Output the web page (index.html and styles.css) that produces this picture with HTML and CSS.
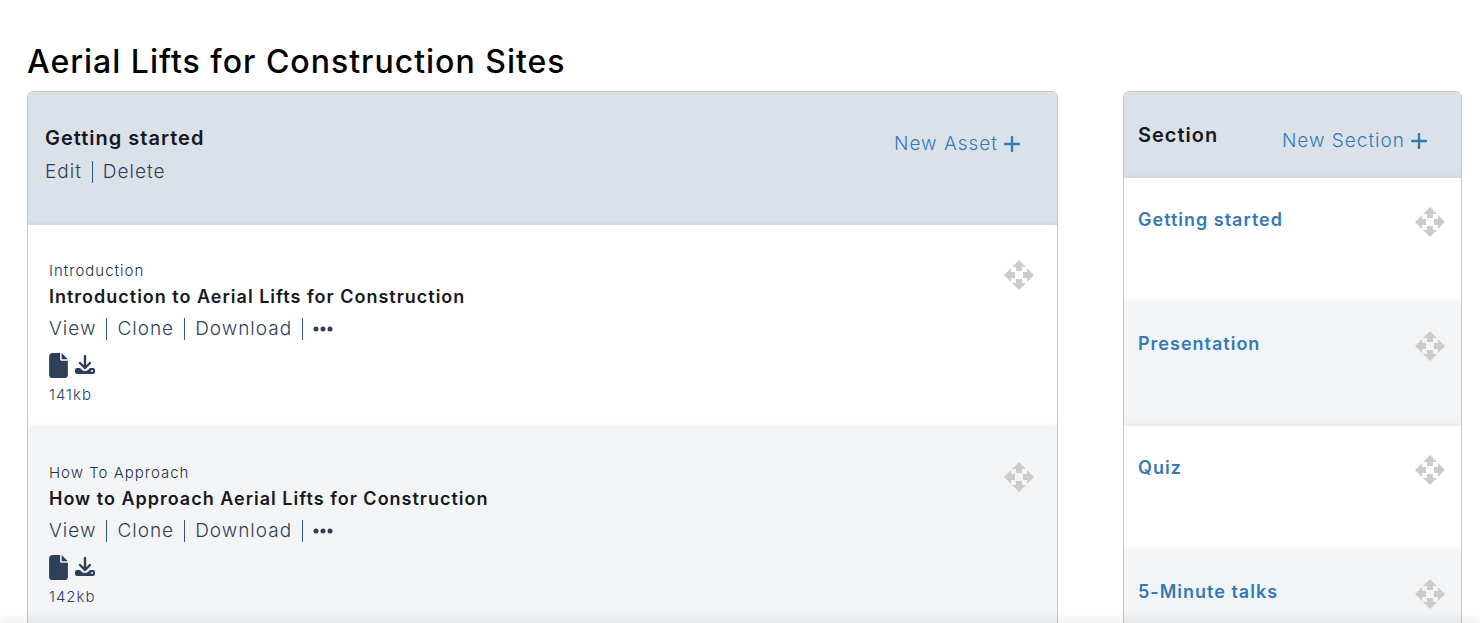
FILE: index.html
```
<!DOCTYPE html>
<html lang="en">
<head>
  <title>Aerial Lifts for Construction Sites</title>
  <meta charset="utf-8">
  <link rel="stylesheet" href="styles.css">
</head>
<body>
  <!-- shared icons -->
  <svg class="sprite" aria-hidden="true">
    <symbol id="move" viewBox="0 0 30 30">
      <path d="M15 0l7 7h-4v4h-6V7H8zM15 30l-7-7h4v-4h6v4h4zM0 15l7-7v4h4v6H7v4zM30 15l-7 7v-4h-4v-6h4V8z"/>
    </symbol>
    <symbol id="plus" viewBox="0 0 16 16">
      <path d="M8 1v14M1 8h14" fill="none" stroke="currentColor" stroke-width="2.400" stroke-linecap="round"/>
    </symbol>
    <symbol id="file" viewBox="0 0 384 512">
      <path d="M0 64C0 28.700 28.700 0 64 0H224v128c0 17.700 14.300 32 32 32h128v288c0 35.300-28.700 64-64 64H64c-35.300 0-64-28.700-64-64zM384 128H256V0z"/>
    </symbol>
    <symbol id="download" viewBox="0 0 20 20">
      <path d="M10 1v12M5 8l5 5 5-5" fill="none" stroke="currentColor" stroke-width="2.400" stroke-linecap="round" stroke-linejoin="round"/>
      <path d="M2 13h3l2 2q3 2 6 0l2-2h3q2 0 2 2v2q0 2-2 2H2q-2 0-2-2v-2q0-2 2-2zM17 15a1 1 0 1 0 0 2 1 1 0 0 0 0-2z" fill-rule="evenodd"/>
    </symbol>
    <symbol id="dots" viewBox="0 0 20 6">
      <circle cx="3" cy="3" r="2.500"/><circle cx="10" cy="3" r="2.500"/><circle cx="17" cy="3" r="2.500"/>
    </symbol>
  </svg>

  <div id="container">
    <h1>Aerial Lifts for Construction Sites</h1>
    <div class="columns">
      <main class="panel assets">
        <div class="panel-head">
          <div>
            <h2>Getting started</h2>
            <div class="links">
              <a href="#">Edit</a>
              <a href="#">Delete</a>
            </div>
          </div>
          <a class="new" href="#">New Asset <svg><use href="#plus"/></svg></a>
        </div>

        <div class="row">
          <div>
            <p class="small">Introduction</p>
            <h3>Introduction to Aerial Lifts for Construction</h3>
            <div class="links">
              <a href="#">View</a>
              <a href="#">Clone</a>
              <a href="#">Download</a>
              <a href="#" aria-label="More"><svg class="dots"><use href="#dots"/></svg></a>
            </div>
            <div class="files">
              <svg class="file"><use href="#file"/></svg>
              <svg class="download"><use href="#download"/></svg>
            </div>
            <p class="small size">141kb</p>
          </div>
          <svg class="move"><use href="#move"/></svg>
        </div>

        <div class="row">
          <div>
            <p class="small">How To Approach</p>
            <h3>How to Approach Aerial Lifts for Construction</h3>
            <div class="links">
              <a href="#">View</a>
              <a href="#">Clone</a>
              <a href="#">Download</a>
              <a href="#" aria-label="More"><svg class="dots"><use href="#dots"/></svg></a>
            </div>
            <div class="files">
              <svg class="file"><use href="#file"/></svg>
              <svg class="download"><use href="#download"/></svg>
            </div>
            <p class="small size">142kb</p>
          </div>
          <svg class="move"><use href="#move"/></svg>
        </div>
      </main>

      <aside class="panel sections">
        <div class="panel-head">
          <h2>Section</h2>
          <a class="new" href="#">New Section <svg><use href="#plus"/></svg></a>
        </div>
        <div class="row"><a href="#">Getting started</a><svg class="move"><use href="#move"/></svg></div>
        <div class="row"><a href="#">Presentation</a><svg class="move"><use href="#move"/></svg></div>
        <div class="row"><a href="#">Quiz</a><svg class="move"><use href="#move"/></svg></div>
        <div class="row"><a href="#">5-Minute talks</a><svg class="move"><use href="#move"/></svg></div>
      </aside>
    </div>
  </div>
  <footer></footer>
</body>
</html>
```
FILE: styles.css
```
* {
  box-sizing: border-box;
}
body {
  margin: 0;
  font-family: Inter, "Liberation Sans", sans-serif;
  font-size: 19px;
  font-weight: 300;
  letter-spacing: 1px;
  color: #2e3f5a;
  background-color: white;
}
h1, h2, h3, p {
  margin: 0;
  font-weight: 600;
}
a {
  color: inherit;
  text-decoration: none;
}
svg {
  fill: currentColor;
  flex: none;
}
.sprite {
  display: none;
}

#container {
  height: 100vh;
  overflow: hidden;
  padding: 42px 18px 0 27px;
}
h1 {
  font-size: 32px;
  font-weight: 500;
  line-height: 40px;
  color: black;
  margin-bottom: 9px;
}
.columns {
  display: grid;
  grid-template-columns: 1031fr 339fr;
  align-items: start;
  gap: 65px;
}

.panel {
  border: 1px solid #c8c8c8;
  border-radius: 6px;
  overflow: hidden;
}
.panel-head {
  display: flex;
  justify-content: space-between;
  align-items: flex-start;
  background-color: #dbe1e9;
}
.assets .panel-head {
  height: 133px;
  padding: 30px 37px 0 17px;
}
.sections .panel-head {
  height: 86px;
  padding: 27px 34px 0 14px;
}
h2 {
  font-size: 20px;
  line-height: 32px;
  color: #16191d;
}
.new {
  display: flex;
  align-items: center;
  gap: 6px;
  line-height: 32px;
  margin-top: 6px;
  color: #337ab7;
}
.new svg {
  width: 16px;
  height: 16px;
}

.links {
  display: flex;
  align-items: center;
  height: 36px;
}
.links a {
  line-height: 22px;
}
.links a + a {   /* divider between links */
  margin-left: 10px;
  padding-left: 10px;
  border-left: 1px solid #2e56a0;
}

.row {
  display: flex;
  justify-content: space-between;
  align-items: flex-start;
  background-color: white;
  box-shadow: 0 0 5px rgba(0, 0, 0, .1);
}
.row:nth-child(odd) {
  background-color: #f3f4f6;
}
.assets .row {
  padding: 33px 23px 19px 21px;
}
.sections .row {
  height: 124px;
  padding: 27px 16px 0 14px;
}
.sections .row a {
  font-size: 18px;
  line-height: 30px;
  font-weight: 600;
  color: #337ab7;
}
.small {
  font-size: 15px;
  line-height: 26px;
  font-weight: 300;
  color: #27303f;
}
.size {
  color: #2e3f5a;
}
h3 {
  font-size: 18px;
  line-height: 26px;
  color: #16191d;
}
.row .links {
  height: 38px;
}
.dots {
  display: block;
  width: 20px;
  height: 22px;
}
.files {
  display: flex;
  align-items: center;
  gap: 7px;
  height: 34px;
}
.file {
  width: 19px;
  height: 25px;
}
.download {
  width: 20px;
  height: 20px;
}
.move {
  width: 30px;
  height: 30px;
  margin-top: 2px;
  color: #cbcbcb;
}

/* bar under the page, only its shadow shows */
footer {
  position: fixed;
  bottom: 0;
  width: 100%;
  box-shadow: 0 0 10px 1px rgba(0, 0, 0, .3);
}
```
